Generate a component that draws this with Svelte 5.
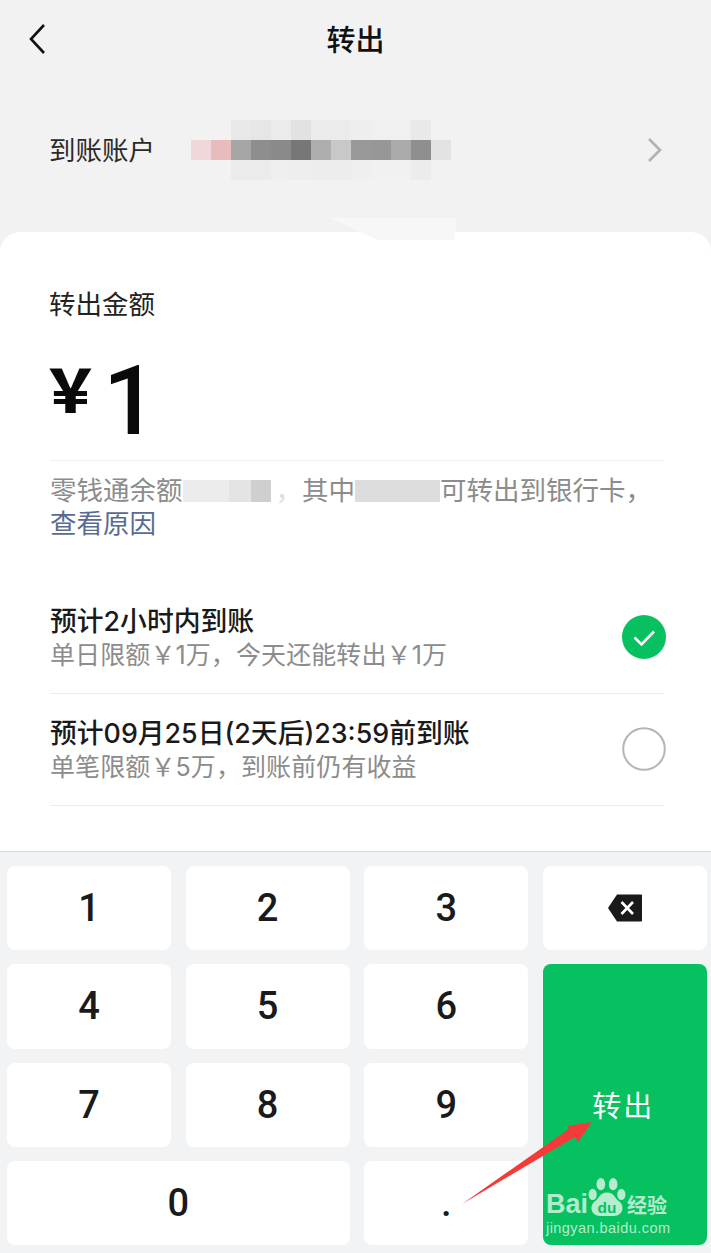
<script>
	const mosaic = [
		{ w: 20, c: '#f0d8da' }, { w: 20, c: '#e8bcbd' }, { w: 20, c: '#a6a6a6' }, { w: 20, c: '#8e8e8e' },
		{ w: 20, c: '#8a8a8a' }, { w: 20, c: '#777777' }, { w: 20, c: '#aeaeae' }, { w: 20, c: '#c8c8c8' },
		{ w: 20, c: '#999999' }, { w: 20, c: '#979797' }, { w: 20, c: '#ababab' }, { w: 20, c: '#8f8f8f' },
		{ w: 20, c: '#e3e3e3' }
	];
	const mosaicTop = ['#e9e9e9', '#e6e6e6', '#ebebeb', '#e2e2e2', '#ebebeb', '#ebebeb', '#eeeeee', '#f0f0f0', '#f0f0f0', '#e9e9e9'];
	const mosaicBottom = ['#ebebeb', '#ebebeb', '#efefef', '#eeeeee', '#ededed', '#ededed', '#efefef', '#f1f1f1', '#f1f1f1', '#ececec'];

	const options = [
		{ title: '预计2小时内到账', note: '单日限额￥1万，今天还能转出￥1万', checked: true },
		{ title: '预计09月25日(2天后)23:59前到账', note: '单笔限额￥5万，到账前仍有收益', checked: false }
	];
</script>

<div class="page">
	<header class="topbar">
		<svg class="back" width="20" height="32" viewBox="0 0 20 32">
			<path d="M16 2 L3 16 L16 30" fill="none" stroke="#111" stroke-width="2.6" />
		</svg>
		<h1>转出</h1>
	</header>

	<div class="account">
		<span class="account-label">到账账户</span>
		<div class="mosaic">
			<div class="mosaic-band">
				{#each mosaicTop as c}<i style="background:{c}"></i>{/each}
			</div>
			<div class="mosaic-row">
				{#each mosaic as m}<i style="width:{m.w}px;background:{m.c}"></i>{/each}
			</div>
			<div class="mosaic-band">
				{#each mosaicBottom as c}<i style="background:{c}"></i>{/each}
			</div>
		</div>
		<svg class="chevron" width="16" height="26" viewBox="0 0 16 26">
			<path d="M2 2 L13 13 L2 24" fill="none" stroke="#b2b2b2" stroke-width="2.6" />
		</svg>
	</div>

	<svg class="smudge" width="130" height="24" viewBox="0 0 130 24">
		<path d="M0 0 H126 V8 L124 22 H48 Z" fill="#f7f7f7" />
	</svg>

	<main class="card">
		<div class="amount-label">转出金额</div>
		<div class="amount">
			<span class="yen">￥</span><span class="value">1</span>
		</div>
		<p class="balance">
			零钱通余额<span class="redact first"><i></i><i></i><i></i></span><span class="faint">，</span>其中<span class="redact second"></span>可转出到银行卡，<br />
			<span class="link">查看原因</span>
		</p>

		<ul class="options">
			{#each options as opt}
				<li class="option">
					<div class="option-text">
						<div class="option-title">{opt.title}</div>
						<div class="option-note">{opt.note}</div>
					</div>
					{#if opt.checked}
						<svg class="radio" width="44" height="44" viewBox="0 0 44 44">
							<circle cx="22" cy="22" r="22" fill="#07c160" />
							<path d="M12.5 22.5 L19.5 29.5 L32 16.5" fill="none" stroke="#fff" stroke-width="2.6" />
						</svg>
					{:else}
						<svg class="radio" width="44" height="44" viewBox="0 0 44 44">
							<circle cx="22" cy="22" r="20.8" fill="none" stroke="#b5b5b5" stroke-width="2" />
						</svg>
					{/if}
				</li>
			{/each}
		</ul>
	</main>

	<section class="keypad">
		<button class="key">1</button>
		<button class="key">2</button>
		<button class="key">3</button>
		<button class="key" aria-label="删除">
			<svg width="36" height="30" viewBox="0 0 36 30">
				<path d="M10 1.5 H34 a1 1 0 0 1 1 1 V27.5 a1 1 0 0 1 -1 1 H10 L1 15 Z" fill="#1a1a1a" />
				<path d="M14.5 9 L26 21 M26 9 L14.5 21" stroke="#fff" stroke-width="2.6" fill="none" />
			</svg>
		</button>
		<button class="key">4</button>
		<button class="key">5</button>
		<button class="key">6</button>
		<button class="key submit">转出</button>
		<button class="key">7</button>
		<button class="key">8</button>
		<button class="key">9</button>
		<button class="key zero">0</button>
		<button class="key">.</button>
	</section>

	<!-- annotation arrow drawn over the screenshot -->
	<svg class="arrow" width="711" height="1253" viewBox="0 0 711 1253">
		<path d="M462 1204 L569 1129 L567 1126 L592 1122 L578 1142 L575 1137 Z" fill="#f53a3a" />
	</svg>

	<div class="watermark">
		<div class="wm-top">
			<span class="wm-bai">Bai</span>
			<svg class="wm-paw" width="38" height="41" viewBox="0 0 36 40">
				<ellipse cx="4" cy="17" rx="4" ry="5.5" />
				<ellipse cx="12" cy="7" rx="4.2" ry="6" />
				<ellipse cx="24" cy="7" rx="4.2" ry="6" />
				<ellipse cx="32" cy="17" rx="4" ry="5.5" />
				<path d="M18 15 C25 15 26 21 30 24 C36 29 33 38 25 38 H11 C3 38 0 29 6 24 C10 21 11 15 18 15 Z" />
				<text x="18" y="35" text-anchor="middle" class="wm-du">du</text>
			</svg>
			<span class="wm-cn">经验</span>
		</div>
		<div class="wm-url">jingyan.baidu.com</div>
	</div>
</div>

<style>
	:global(body) {
		margin: 0;
		background: #f2f2f2;
	}
	.page {
		position: relative;
		width: 711px;
		height: 1253px;
		overflow: hidden;
		display: flex;
		flex-direction: column;
		background: #f2f2f2;
		font-family: 'Noto Sans CJK SC', 'Noto Sans', sans-serif;
		color: #1a1a1a;
	}
	.topbar {
		height: 76px;
		padding-bottom: 4px;
		display: flex;
		align-items: center;
		justify-content: center;
		position: relative;
		flex: none;
	}
	.topbar h1 {
		margin: 0;
		font-size: 29px;
		font-weight: 500;
		color: #111;
	}
	.back {
		position: absolute;
		left: 28px;
		top: 23px;
	}
	.account {
		height: 140px;
		flex: none;
		display: flex;
		align-items: center;
		padding: 0 48px 0 50px;
		margin-bottom: 12px;
	}
	.account-label {
		font-size: 26.5px;
		width: 141px;
		margin-left: -1px;
		padding-left: 0;
		padding-right: 1px;
		padding-bottom: 4px;
		color: #2a2a2a;
	}
	.mosaic {
		width: 260px;
	}
	.mosaic-band {
		display: flex;
		padding-left: 40px;
		height: 20px;
	}
	.mosaic-band i {
		width: 20px;
	}
	.mosaic-row {
		display: flex;
		height: 20px;
	}
	.chevron {
		margin-left: auto;
	}
	.smudge {
		position: absolute;
		left: 330px;
		top: 218px;
		z-index: 1;
	}
	.card {
		flex: 1;
		background: #fff;
		border-radius: 20px 20px 0 0;
		padding: 53px 47px 0 50px;
		position: relative;
		z-index: 0;
	}
	.amount-label {
		font-size: 26.5px;
		line-height: 36px;
		margin-left: -1px;
		color: #222;
	}
	.amount {
		display: flex;
		align-items: center;
		border-bottom: 1px solid #f0f0f0;
		box-sizing: border-box;
		height: 140px;
		color: #0a0a0a;
	}
	.yen {
		font-size: 59px;
		font-weight: 900;
		width: 60px;
		margin-left: -9px;
		position: relative;
		top: -3px;
	}
	.value {
		font-family: 'Roboto', sans-serif;
		font-size: 96px;
		line-height: 1;
		font-weight: 500;
		position: relative;
		top: 10px;
		margin-left: 2px;
	}
	.balance {
		margin: 11px 0 0;
		font-size: 26.5px;
		line-height: 33px;
		color: #8c8c8c;
		white-space: nowrap;
	}
	.redact {
		display: inline-block;
		height: 22px;
		vertical-align: -2px;
	}
	.redact.first {
		display: inline-flex;
		width: 88px;
		margin-right: 5px;
	}
	.redact.first i:nth-child(1) {
		width: 46px;
		background: #ececec;
	}
	.redact.first i:nth-child(2) {
		width: 22px;
		background: #e4e4e4;
	}
	.redact.first i:nth-child(3) {
		width: 20px;
		background: #cfcfcf;
	}
	.redact.second {
		width: 85px;
		background: #dcdcdc;
	}
	.faint {
		color: #ddd;
	}
	.link {
		color: #576b95;
	}
	.options {
		list-style: none;
		margin: 44px 0 0;
		padding: 0;
	}
	.option {
		height: 112px;
		box-sizing: border-box;
		border-bottom: 1px solid #ececec;
		display: flex;
		align-items: center;
		justify-content: space-between;
	}
	.option-text {
		display: flex;
		flex-direction: column;
	}
	.radio {
		margin: -2px -2px 0 0;
	}
	.option-title {
		font-family: 'Inter', 'Noto Sans CJK SC', sans-serif;
		font-size: 26.8px;
		line-height: 34px;
		font-weight: 500;
		color: #1a1a1a;
	}
	.option-note {
		font-family: 'Inter', 'Noto Sans CJK SC', sans-serif;
		font-size: 25px;
		letter-spacing: 0.1px;
		line-height: 34px;
		color: #8c8c8c;
	}
	.keypad {
		flex: none;
		box-sizing: border-box;
		height: 402px;
		border-top: 1px solid #d8d8d8;
		background: #f2f3f5;
		padding: 14px 4px 8px 7px;
		display: grid;
		grid-template-columns: repeat(4, 164px);
		grid-template-rows: repeat(4, 84.25px);
		column-gap: 14.6px;
		row-gap: 14px;
	}
	.key {
		border: none;
		padding: 0;
		background: #fff;
		border-radius: 8px;
		display: flex;
		align-items: center;
		justify-content: center;
		font-family: 'Roboto', sans-serif;
		font-size: 38px;
		font-weight: 500;
		color: #1a1a1a;
	}
	.zero {
		grid-column: span 2;
	}
	.submit {
		grid-column: 4;
		grid-row: 2 / span 3;
		background: #07c160;
		color: #fff;
		font-family: 'Noto Sans CJK SC', sans-serif;
		font-size: 29px;
		font-weight: 400;
		letter-spacing: 2px;
		padding-bottom: 2px;
		padding-right: 3px;
	}
	.arrow {
		position: absolute;
		left: 0;
		top: 0;
		pointer-events: none;
	}
	.watermark {
		position: absolute;
		left: 546px;
		top: 1176px;
		width: 126px;
		color: rgba(255, 255, 255, 0.7);
		font-family: 'Liberation Sans', sans-serif;
	}
	.wm-top {
		display: flex;
		align-items: flex-end;
		height: 42px;
	}
	.wm-bai {
		font-size: 27px;
		font-weight: 700;
		line-height: 28px;
		width: 42px;
		flex: none;
	}
	.wm-paw {
		flex: none;
		fill: rgba(255, 255, 255, 0.7);
	}
	.wm-du {
		font-family: 'Liberation Sans', sans-serif;
		font-size: 15px;
		font-weight: 700;
		fill: #07c160;
	}
	.wm-cn {
		font-family: 'Noto Sans CJK SC', sans-serif;
		font-size: 20px;
		line-height: 26px;
		font-weight: 700;
		margin-left: 1px;
		white-space: nowrap;
	}
	.wm-url {
		font-size: 14.5px;
		line-height: 18px;
		margin-top: 1px;
		letter-spacing: 0.45px;
		white-space: nowrap;
	}
</style>
